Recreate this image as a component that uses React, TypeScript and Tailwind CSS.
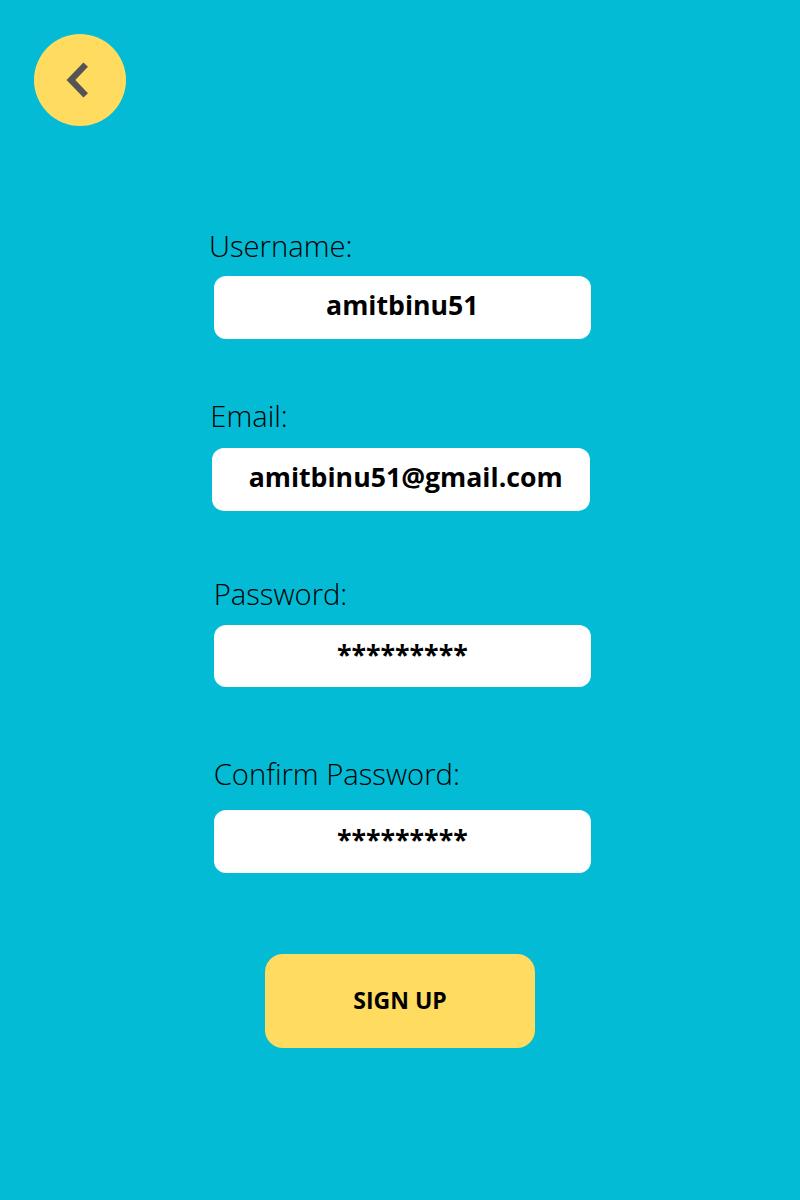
type FieldProps = {
  label: string;
  value: string;
  group: string;
  box: string;
  text: string;
};

function Field({ label, value, group, box, text }: FieldProps) {
  return (
    <div className={`flex flex-col items-start ${group}`}>
      <div className="whitespace-nowrap text-[29.2px] font-light leading-[40px]">{label}</div>
      <div className={`flex w-[377.3px] justify-center rounded-[12px] bg-white pt-[9px] ${box}`}>
        <span className={`whitespace-nowrap text-[26.67px] font-bold leading-[40px] ${text}`}>{value}</span>
      </div>
    </div>
  );
}

export default function App() {
  return (
    <main className="flex h-[1200px] w-[800px] flex-col overflow-hidden bg-[#03bbd5] font-['Open_Sans',sans-serif] text-black">
      <button aria-label="Back" className="mt-[33.5px] ml-[33.6px] h-[92.5px] w-[92.5px] shrink-0 rounded-full bg-[#ffdb5f]">
        <svg viewBox="0 0 92.5 92.5" className="h-full w-full" fill="none" stroke="#545454" strokeWidth="6.3">
          <path d="M51.7 30.6 L36.9 46 L51.7 61.4" />
        </svg>
      </button>
      <form className="flex flex-col">
        <Field label="Username:" value="amitbinu51" group="mt-[100px] ml-[209px]" box="h-[62.7px] mt-[10px] ml-[4.7px]" text="" />
        <Field label="Email:" value="amitbinu51@gmail.com" group="mt-[57.3px] ml-[210.3px]" box="h-[62.7px] mt-[12px] ml-[2.2px]" text="ml-[9px]" />
        <Field label="Password:" value="*********" group="mt-[63.3px] ml-[213.7px]" box="h-[62.7px] mt-[10.6px]" text="" />
        <Field label="Confirm Password:" value="*********" group="mt-[66.7px] ml-[213.7px]" box="h-[63px] mt-[15.6px]" text="" />
        <button type="button" className="mt-[81.6px] ml-[265px] h-[93.6px] w-[270px] rounded-[18px] bg-[#ffdb5f] pb-[1px] text-[23px] font-bold">SIGN UP</button>
      </form>
    </main>
  );
}
